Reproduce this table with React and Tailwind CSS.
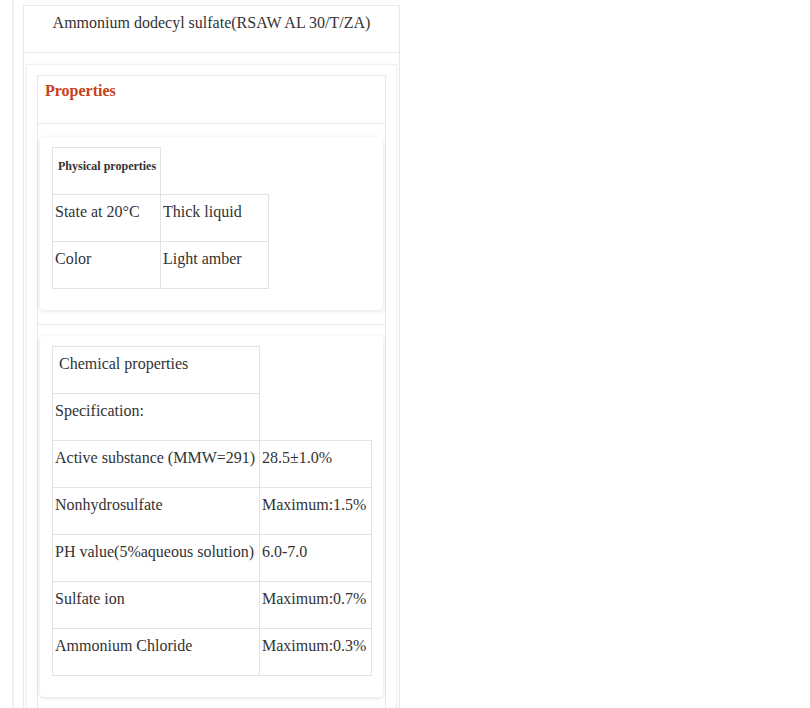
import React from 'react';

const physical = [
   ['State at 20°C', 'Thick liquid'],
   ['Color', 'Light amber'],
];

const chemical = [
   ['Active substance (MMW=291)', '28.5±1.0%'],
   ['Nonhydrosulfate', 'Maximum:1.5%'],
   ['PH value(5%aqueous solution)', '6.0-7.0'],
   ['Sulfate ion', 'Maximum:0.7%'],
   ['Ammonium Chloride', 'Maximum:0.3%'],
];

const cell = 'h-[47px] border-[#e2e2e2] px-[2px] pt-[5px] leading-[24px]';

const Card = ({ children, className = '' }) => (
   <div className={`rounded-[4px] bg-white pl-[12px] pt-[10px] pb-[21px] shadow-[0_1px_4px_rgba(0,0,0,0.13)] ${className}`}>
      {children}
   </div>
);

const App = () => {
   return (
      <div
         className="min-h-[708px] bg-white text-[16px] text-[#333]"
         style={{ fontFamily: '"Liberation Serif", "Times New Roman", serif' }}
      >
         <div className="ml-[12px] min-h-[708px] border-l-2 border-[#efefef] pl-[9px] pt-[5px]">
            <div className="w-[377px] min-h-[703px] border-x border-[#e8e8e8]">
               {/* Title */}
               <div className="h-[48px] border-y border-[#ebebeb] pt-[5px] text-center leading-[24px]">
                  Ammonium dodecyl sulfate(RSAW AL 30/T/ZA)
               </div>

               <div className="pt-[11px]">
                  <div className="mx-[2px] border border-[#f0f0f0] px-[10px] pt-[10px] shadow-[0_0_2px_rgba(0,0,0,0.06)]">
                     <div className="border border-[#e6e6e6]">
                        {/* Header */}
                        <div className="h-[48px] border-b border-[#e6e6e6] pl-[7px] pt-[3px] font-bold leading-[24px] text-[#c7401c]">
                           Properties
                        </div>

                        {/* Physical properties */}
                        <div className="border-b border-[#e6e6e6] px-[2px] pt-[13px] pb-[14px]">
                           <Card>
                              <div className={`${cell} w-[109px] border-x border-t pt-[6px] text-[12px] font-bold`}>
                                 &nbsp;Physical properties
                              </div>
                              {physical.map(([k, v], i) => (
                                 <div key={k} className="flex">
                                    <div className={`${cell} w-[108px] border-l border-t ${i === physical.length - 1 ? 'h-[48px] border-b' : ''}`}>
                                       {k}
                                    </div>
                                    <div className={`${cell} w-[109px] border-x border-t ${i === physical.length - 1 ? 'h-[48px] border-b' : ''}`}>
                                       {v}
                                    </div>
                                 </div>
                              ))}
                           </Card>
                        </div>

                        {/* Chemical properties */}
                        <div className="border-b border-[#e6e6e6] px-[2px] pt-[11px] pb-[11px]">
                           <Card>
                              <div className={`${cell} w-[208px] border-x border-t`}>&nbsp;Chemical properties</div>
                              <div className={`${cell} w-[208px] border-x border-t`}>Specification:</div>
                              {chemical.map(([k, v], i) => (
                                 <div key={k} className="flex">
                                    <div className={`${cell} w-[207px] border-l border-t ${i === chemical.length - 1 ? 'h-[48px] border-b' : ''}`}>
                                       {k}
                                    </div>
                                    <div className={`${cell} w-[113px] border-x border-t ${i === chemical.length - 1 ? 'h-[48px] border-b' : ''}`}>
                                       {v}
                                    </div>
                                 </div>
                              ))}
                           </Card>
                        </div>
                        <div className="h-[40px]"></div>
                     </div>
                  </div>
               </div>
            </div>
         </div>
      </div>
   );
};

export default App;
